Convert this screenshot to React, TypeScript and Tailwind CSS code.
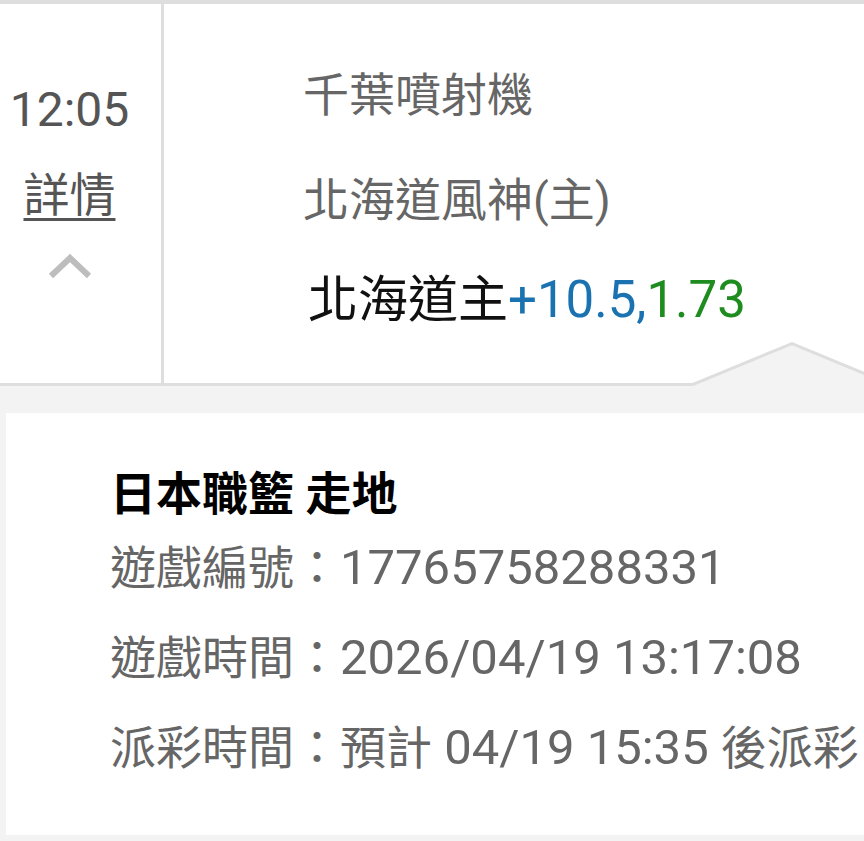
import React from "react";

const font = "font-['Roboto','Noto_Sans_CJK_TC',sans-serif]";

const App: React.FC = () => {
  return (
    <div className={`${font} relative w-[864px] h-[841px] overflow-hidden bg-[#f3f3f3]`}>
      {/* Match row */}
      <div className="flex h-[386px] bg-white border-t-4 border-b-[3px] border-[#dedede]">
        {/* Left column */}
        <div className="w-[164px] shrink-0 border-r-[3px] border-[#dedede] flex flex-col items-center pt-[82px] pr-[22px]">
          <div className="text-[48px] leading-[48px] text-[#555]">12:05</div>
          <div className="mt-[38px] text-[46px] leading-[46px] text-[#555] underline decoration-[3px] underline-offset-[7px]">
            詳情
          </div>
          <svg className="mt-[34px]" width="44" height="28" viewBox="0 0 44 28">
            <polyline points="3,24 22,6 41,24" fill="none" stroke="#bdbdbd" strokeWidth="6" />
          </svg>
        </div>

        {/* Right column */}
        <div className="flex-1 pl-[139px] pt-[68px]">
          <div className="text-[46px] leading-[46px] text-[#666]">千葉噴射機</div>
          <div className="mt-[59px] text-[46px] leading-[46px] text-[#666]">北海道風神(主)</div>
          <div className="mt-[52px] ml-[5px] text-[50px] leading-[50px] text-[#111]">
            北海道主<span className="text-[#1a72b0] text-[51px]">+10.5,</span>
            <span className="text-[#1f8c1f] text-[51px]">1.73</span>
          </div>
        </div>
      </div>

      {/* Callout notch */}
      <svg className="absolute left-[680px] top-[330px]" width="184" height="62" viewBox="0 0 184 62">
        <polygon points="13,54 112,13 211,54 211,62 13,62" fill="#f3f3f3" />
        <polyline points="0,54.5 13,54.5 112,13.5 211,54.5" fill="none" stroke="#dedede" strokeWidth="3" />
      </svg>

      {/* Detail card */}
      <div className="mt-[27px] ml-[6px] h-[422px] bg-white pl-[104px] pt-[58px]">
        <div className="text-[46px] leading-[46px] font-bold text-black">日本職籃 走地</div>
        <div className="mt-[28px] text-[46px] leading-[46px] text-[#666] whitespace-nowrap">
          遊戲編號：<span className="text-[49px]">17765758288331</span>
        </div>
        <div className="mt-[44px] text-[46px] leading-[46px] text-[#666] whitespace-nowrap">
          遊戲時間：<span className="text-[49px]">2026/04/19 13:17:08</span>
        </div>
        <div className="mt-[44px] text-[46px] leading-[46px] text-[#666] whitespace-nowrap">
          派彩時間：預計<span className="text-[49px]"> 04/19 15:35 </span>後派彩
        </div>
      </div>
    </div>
  );
};

export default App;
